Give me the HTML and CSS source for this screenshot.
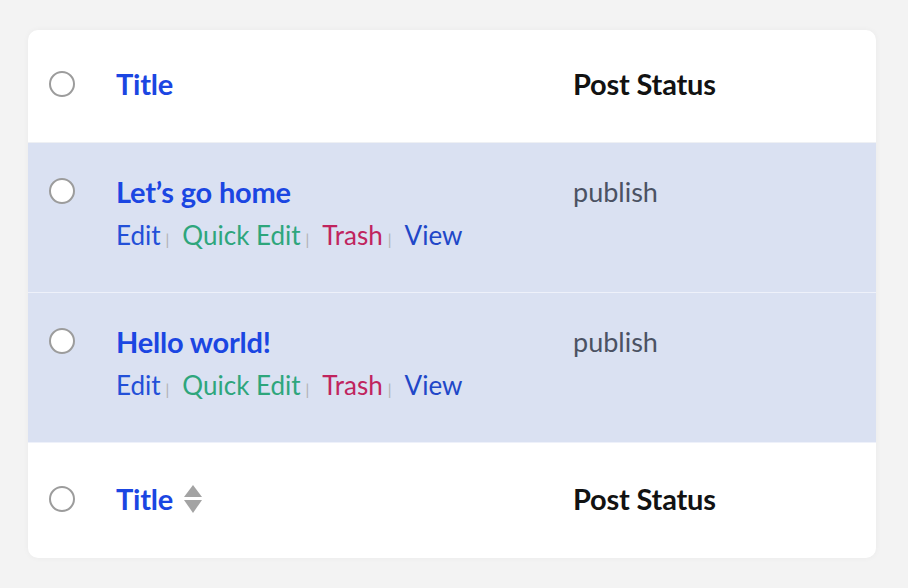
FILE: index.html
```html
<!DOCTYPE html>
<html lang="en">
<head>
<meta charset="utf-8">
<title>Posts</title>
<link rel="stylesheet" href="styles.css">
</head>
<body>
<div class="card">
  <div class="row head">
    <div class="cb"><span class="circle"></span></div>
    <div class="col-title"><a class="th-link">Title</a></div>
    <div class="col-status"><span class="th">Post Status</span></div>
  </div>
  <div class="row item">
    <div class="cb"><span class="circle"></span></div>
    <div class="col-title">
      <a class="post-title">Let’s go home</a>
      <div class="actions"><a class="edit">Edit</a><span class="sep">|</span><a class="quick">Quick Edit</a><span class="sep">|</span><a class="trash">Trash</a><span class="sep">|</span><a class="view">View</a></div>
    </div>
    <div class="col-status"><span class="status">publish</span></div>
  </div>
  <div class="row item">
    <div class="cb"><span class="circle"></span></div>
    <div class="col-title">
      <a class="post-title">Hello world!</a>
      <div class="actions"><a class="edit">Edit</a><span class="sep">|</span><a class="quick">Quick Edit</a><span class="sep">|</span><a class="trash">Trash</a><span class="sep">|</span><a class="view">View</a></div>
    </div>
    <div class="col-status"><span class="status">publish</span></div>
  </div>
  <div class="row foot">
    <div class="cb"><span class="circle"></span></div>
    <div class="col-title"><a class="th-link">Title</a><svg class="sort" width="18" height="30" viewBox="0 0 18 30"><path d="M9 1 L18 13 L0 13 Z" fill="#a3a3a3"/><path d="M0 16 L18 16 L9 29 Z" fill="#a3a3a3"/></svg></div>
    <div class="col-status"><span class="th">Post Status</span></div>
  </div>
</div>
</body>
</html>
```
FILE: styles.css
```css
html, body {
  margin: 0;
  padding: 0;
}
body {
  background: #f3f3f3;
  font-family: Lato, "Noto Sans", "Liberation Sans", sans-serif;
  padding: 30px 32px 30px 28px;
}
.card {
  background: #ffffff;
  border-radius: 10px;
  overflow: hidden;
  box-shadow: 0 0 6px rgba(0,0,0,0.04);
  width: 848px;
}
.row {
  display: grid;
  grid-template-columns: 88px 457px 1fr;
  box-sizing: border-box;
}
.head {
  height: 113px;
  padding-bottom: 4px;
  align-items: center;
  border-bottom: 1px solid #eef0f4;
}
.foot {
  height: 115px;
  padding-bottom: 4px;
  align-items: center;
}
.item {
  background: #dae1f2;
  height: 150px;
  border-bottom: 1px solid #eef1fa;
  align-items: start;
}
.cb {
  padding-left: 21px;
  display: flex;
}
.circle {
  display: block;
  width: 22px;
  height: 22px;
  border: 2px solid #9c9c9c;
  border-radius: 50%;
  background: #fff;
}
.item .cb {
  padding-top: 35px;
}
.item .col-title, .item .col-status {
  padding-top: 31px;
}
.th-link, .post-title {
  color: #1b46e2;
  font-weight: 700;
  font-size: 29px;
  line-height: 36px;
  letter-spacing: -0.2px;
}
.col-title {
  display: flex;
  flex-direction: column;
  align-items: flex-start;
}
.foot .col-title {
  flex-direction: row;
  align-items: center;
}
.sort {
  margin-left: 11px;
}
.th {
  color: #121212;
  font-weight: 700;
  font-size: 29px;
  line-height: 36px;
  letter-spacing: -0.2px;
}
.actions {
  margin-top: 7px;
  font-size: 26px;
  line-height: 36px;
  display: flex;
  align-items: baseline;
}
.edit { color: #2350d8; }
.quick { color: #2ea67c; }
.trash { color: #c0245e; }
.view { color: #2147c8; }
.sep {
  color: #b0b0b0;
  font-size: 15px;
  margin: 0 13px 0 5px;
}
.status {
  color: #4b5263;
  font-size: 27px;
  line-height: 36px;
}
```
